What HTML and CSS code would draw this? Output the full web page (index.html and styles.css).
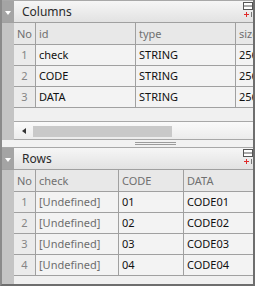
FILE: index.html
```html
<!DOCTYPE html>
<html lang="en">
<head>
    <meta charset="UTF-8">
    <meta name="viewport" content="width=device-width, initial-scale=1.0">
    <title>Columns / Rows</title>
    <link rel="stylesheet" href="styles.css">
</head>
<body>
    <div class="frame">
        <section class="panel">
            <div class="titlebar">
                <span class="toggle"></span>
                <span class="title">Columns</span>
                <svg class="tool" width="10" height="17" viewBox="0 0 10 17">
                    <rect x="0.5" y="0.5" width="9" height="7" fill="#fff" stroke="#555"/>
                    <line x1="0" y1="4" x2="10" y2="4" stroke="#555"/>
                    <line x1="1" y1="12.5" x2="6" y2="12.5" stroke="#e02a2a"/>
                    <line x1="3.5" y1="10" x2="3.5" y2="15" stroke="#e02a2a"/>
                    <line x1="8.5" y1="10" x2="8.5" y2="15" stroke="#777"/>
                </svg>
            </div>
            <div class="body">
                <div class="gutter"></div>
                <div class="content">
                    <div class="grid grid-columns">
                        <div class="cell head no">No</div>
                        <div class="cell head">id</div>
                        <div class="cell head">type</div>
                        <div class="cell head">size</div>

                        <div class="cell no">1</div>
                        <div class="cell">check</div>
                        <div class="cell">STRING</div>
                        <div class="cell">256</div>

                        <div class="cell no">2</div>
                        <div class="cell">CODE</div>
                        <div class="cell">STRING</div>
                        <div class="cell">256</div>

                        <div class="cell no">3</div>
                        <div class="cell">DATA</div>
                        <div class="cell">STRING</div>
                        <div class="cell">256</div>
                    </div>
                    <div class="filler"></div>
                    <div class="hscroll">
                        <span class="arrow"></span>
                        <span class="thumb"></span>
                    </div>
                </div>
            </div>
        </section>

        <div class="splitter"><span class="grip"></span></div>

        <section class="panel panel-rows">
            <div class="titlebar">
                <span class="toggle"></span>
                <span class="title">Rows</span>
                <svg class="tool" width="10" height="17" viewBox="0 0 10 17">
                    <rect x="0.5" y="0.5" width="9" height="7" fill="#fff" stroke="#555"/>
                    <line x1="0" y1="4" x2="10" y2="4" stroke="#555"/>
                    <line x1="1" y1="12.5" x2="6" y2="12.5" stroke="#e02a2a"/>
                    <line x1="3.5" y1="10" x2="3.5" y2="15" stroke="#e02a2a"/>
                    <line x1="8.5" y1="10" x2="8.5" y2="15" stroke="#777"/>
                </svg>
            </div>
            <div class="body">
                <div class="gutter"></div>
                <div class="content">
                    <div class="grid grid-rows">
                        <div class="cell head no">No</div>
                        <div class="cell head">check</div>
                        <div class="cell head">CODE</div>
                        <div class="cell head last">DATA</div>

                        <div class="cell no">1</div>
                        <div class="cell undef">[Undefined]</div>
                        <div class="cell">01</div>
                        <div class="cell last">CODE01</div>

                        <div class="cell no">2</div>
                        <div class="cell undef">[Undefined]</div>
                        <div class="cell">02</div>
                        <div class="cell last">CODE02</div>

                        <div class="cell no">3</div>
                        <div class="cell undef">[Undefined]</div>
                        <div class="cell">03</div>
                        <div class="cell last">CODE03</div>

                        <div class="cell no">4</div>
                        <div class="cell undef">[Undefined]</div>
                        <div class="cell">04</div>
                        <div class="cell last">CODE04</div>
                    </div>
                    <div class="filler filler-bottom"></div>
                </div>
            </div>
        </section>
    </div>
</body>
</html>
```

FILE: styles.css
```css
html, body {
    margin: 0;
    padding: 0;
    background: #f0f0f0;
}
body {
    font-family: 'Noto Sans', 'Liberation Sans', sans-serif;
    font-size: 11px;
    color: #111;
}
.frame {
    width: 255px;
    height: 286px;
    box-sizing: border-box;
    border-left: 2px solid #8a8a8a;
    border-right: 2px solid #6e6e6e;
    border-bottom: 2px solid #6e6e6e;
    display: flex;
    flex-direction: column;
    overflow: hidden;
    background: #f0f0f0;
}
.titlebar {
    height: 21px;
    border-top: 1px solid #a8a8a8;
    border-bottom: 1px solid #a0a0a0;
    background: linear-gradient(#f6f6f6, #e2e2e2);
    display: flex;
    align-items: stretch;
}
.toggle {
    width: 12px;
    background: #a4a4a4;
    display: flex;
    align-items: center;
    justify-content: center;
}
.toggle::after {
    content: "";
    border-left: 3.5px solid transparent;
    border-right: 3.5px solid transparent;
    border-top: 4px solid #fff;
    margin-top: 2px;
}
.title {
    font-size: 12px;
    line-height: 21px;
    color: #2a2a2a;
    padding-left: 8px;
}
.tool {
    margin-left: auto;
    margin-top: 1px;
    flex: none;
}
.body {
    display: flex;
}
.gutter {
    width: 12px;
    flex: none;
    background: #c4c4c4;
}
.content {
    flex: 1;
    min-width: 0;
    overflow: hidden;
}
.grid {
    display: grid;
    grid-template-rows: 22px;
    grid-auto-rows: 21px;
}
.grid-columns {
    grid-template-columns: 22px 100px 100px 100px;
    width: 322px;
}
.grid-rows {
    grid-template-columns: 22px 83px 65px 1fr;
}
.cell {
    box-sizing: border-box;
    border-right: 1px solid #a0a0a0;
    border-bottom: 1px solid #a0a0a0;
    padding: 0 3px;
    line-height: 20px;
    white-space: nowrap;
    overflow: hidden;
    background: #f3f3f3;
}
.cell.head {
    background: #e8e8e8;
    color: #707070;
    line-height: 21px;
}
.cell.no {
    background: #ebebeb;
    color: #858585;
    text-align: center;
    padding: 0;
}
.cell.head.no {
    background: #e8e8e8;
    color: #707070;
}
.cell.last {
    border-right: none;
}
.cell.undef {
    color: #6e6e6e;
}
.filler {
    height: 13px;
    border-bottom: 1px solid #a8a8a8;
}
.filler-bottom {
    height: 8px;
    border-bottom: none;
}
.hscroll {
    height: 17px;
    border-bottom: 1px solid #a8a8a8;
    background: linear-gradient(#fafafa, #ececec);
    display: flex;
    align-items: center;
}
.arrow {
    margin-left: 8px;
    border-top: 3px solid transparent;
    border-bottom: 3px solid transparent;
    border-right: 4px solid #333;
}
.thumb {
    margin-left: 7px;
    width: 139px;
    height: 11px;
    margin-top: 1px;
    background: #c9c9c9;
}
.splitter {
    height: 7px;
    background: #f2f2f2;
    display: flex;
    align-items: center;
}
.grip {
    margin-left: 133px;
    width: 41px;
    height: 1px;
    border-top: 1px solid #9c9c9c;
    border-bottom: 1px solid #9c9c9c;
}
```
